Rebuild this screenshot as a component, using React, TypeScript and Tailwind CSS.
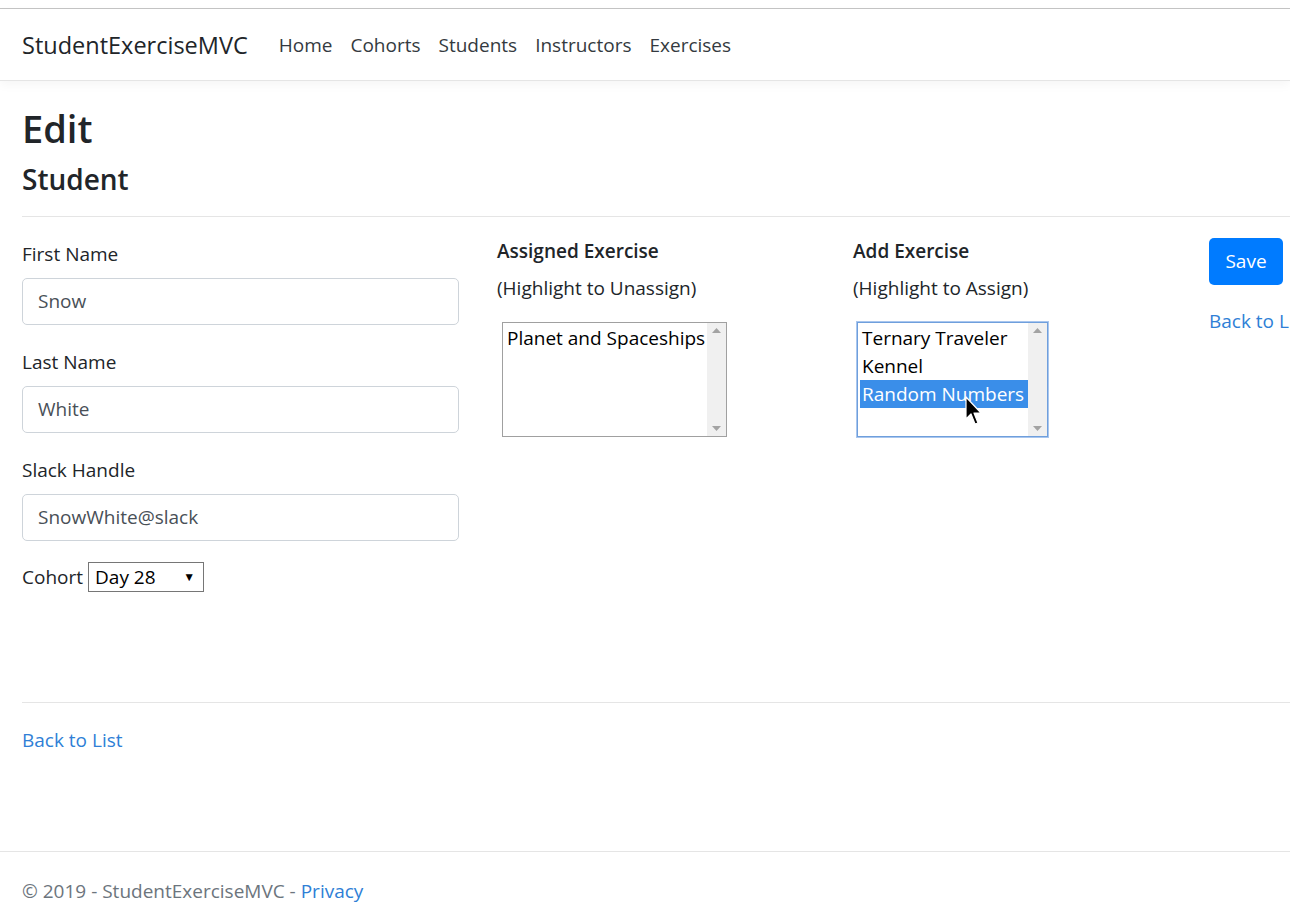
import React from "react"

const navLinks = ["Home", "Cohorts", "Students", "Instructors", "Exercises"]

function Field({ label, value, first }: { label: string; value: string; first?: boolean }) {
  return (
    <div className={first ? "" : "mt-[22px]"}>
      <label className="block leading-[30px]">{label}</label>
      <div className="mt-[9px] flex h-[47px] w-[437px] items-center rounded-[5px] border border-[#ced4da] px-[15px] text-[#495057]">
        {value}
      </div>
    </div>
  )
}

function ScrollTrack() {
  return (
    <div className="flex w-[19px] shrink-0 flex-col items-center justify-between bg-[#f0f0f0] py-[5px]">
      <svg width="9" height="5" viewBox="0 0 9 5">
        <path d="M0 5 L4.5 0 L9 5 Z" fill="#a3a3a3" />
      </svg>
      <svg width="9" height="5" viewBox="0 0 9 5">
        <path d="M0 0 L4.5 5 L9 0 Z" fill="#a3a3a3" />
      </svg>
    </div>
  )
}

function ListBox({
  items,
  selected,
  width,
  focused,
}: {
  items: string[]
  selected?: string
  width: string
  focused?: boolean
}) {
  return (
    <div
      className={[
        "flex h-[115px] overflow-hidden border bg-white",
        width,
        focused ? "border-[#6f9fdc] shadow-[0_0_0_1px_#a9c6ee]" : "border-[#a0a0a0]",
      ].join(" ")}
    >
      <div className="flex-1 pl-[2px] pt-[1px] text-black">
        {items.map((it) => (
          <div
            key={it}
            className={[
              "whitespace-nowrap pl-[2px] leading-[28px]",
              it === selected ? "bg-[#3a8ee9] text-white" : "",
            ].join(" ")}
          >
            {it}
          </div>
        ))}
      </div>
      <ScrollTrack />
    </div>
  )
}

export default function App() {
  return (
    <div className="relative min-h-[921px] w-[1290px] overflow-hidden bg-white font-['Open_Sans',sans-serif] text-[19px] text-[#212529]">
      <div className="h-[9px] border-b border-[#c4c4c4] bg-white" />
      <nav className="flex h-[72px] items-center border-b border-[#e5e5e5] pl-[22px] pt-[2px] shadow-[0_4px_10px_rgba(0,0,0,0.04)]">
        <span className="mr-[31px] text-[23.5px] text-[#212529]">StudentExerciseMVC</span>
        <ul className="flex gap-[18px] text-[#343a40]">
          {navLinks.map((l) => (
            <li key={l}>{l}</li>
          ))}
        </ul>
      </nav>

      <main className="pl-[22px]">
        <h1 className="pt-[23px] text-[38px] font-semibold leading-[48px]">Edit</h1>
        <h4 className="mt-[10px] text-[28px] font-semibold leading-[34px]">Student</h4>
        <hr className="mt-[20px] border-[#e5e5e5]" />

        <div className="flex pt-[19px]">
          <div className="w-[475px] shrink-0 pt-[3px]">
            <Field label="First Name" value="Snow" first />
            <Field label="Last Name" value="White" />
            <Field label="Slack Handle" value="SnowWhite@slack" />
            <div className="mt-[21px] flex items-center gap-[5px]">
              <span>Cohort</span>
              <div className="flex h-[30px] w-[116px] items-center justify-between border border-[#767676] pl-[6px] pr-[8px] text-black">
                <span>Day 28</span>
                <span className="text-[12px]">▼</span>
              </div>
            </div>
          </div>

          <div className="w-[356px] shrink-0">
            <div className="font-semibold leading-[30px]">Assigned Exercise</div>
            <div className="mt-[7px] leading-[30px]">(Highlight to Unassign)</div>
            <div className="ml-[5px] mt-[19px]">
              <ListBox items={["Planet and Spaceships"]} width="w-[225px]" />
            </div>
          </div>

          <div className="w-[356px] shrink-0">
            <div className="font-semibold leading-[30px]">Add Exercise</div>
            <div className="mt-[7px] leading-[30px]">(Highlight to Assign)</div>
            <div className="ml-[4px] mt-[19px]">
              <ListBox
                items={["Ternary Traveler", "Kennel", "Random Numbers"]}
                selected="Random Numbers"
                width="w-[191px]"
                focused
              />
            </div>
          </div>

          <div className="shrink-0 pt-[2px]">
            <button className="h-[47px] w-[74px] rounded-[5px] bg-[#007bff] text-white">Save</button>
            <div className="mt-[21px] whitespace-nowrap leading-[30px] text-[#2f7fd6]">Back to List</div>
          </div>
        </div>

        <hr className="mt-[110px] border-[#e5e5e5]" />
        <div className="mt-[22px] leading-[30px] text-[#2f7fd6]">Back to List</div>
      </main>

      <footer className="mt-[96px] border-t border-[#e5e5e5] pl-[22px] pt-[24px] text-[#6c757d]">
        <span className="leading-[30px]">
          © 2019 - StudentExerciseMVC - <span className="text-[#2f7fd6]">Privacy</span>
        </span>
      </footer>

      <svg
        className="absolute left-[965px] top-[396px]"
        width="18"
        height="30"
        viewBox="0 0 18 30"
      >
        <path
          d="M1 1 L1 23 L6 18 L10 28 L13 27 L9 17 L16 17 Z"
          fill="#000"
          stroke="#fff"
          strokeWidth="1.2"
          strokeLinejoin="round"
        />
      </svg>
    </div>
  )
}
